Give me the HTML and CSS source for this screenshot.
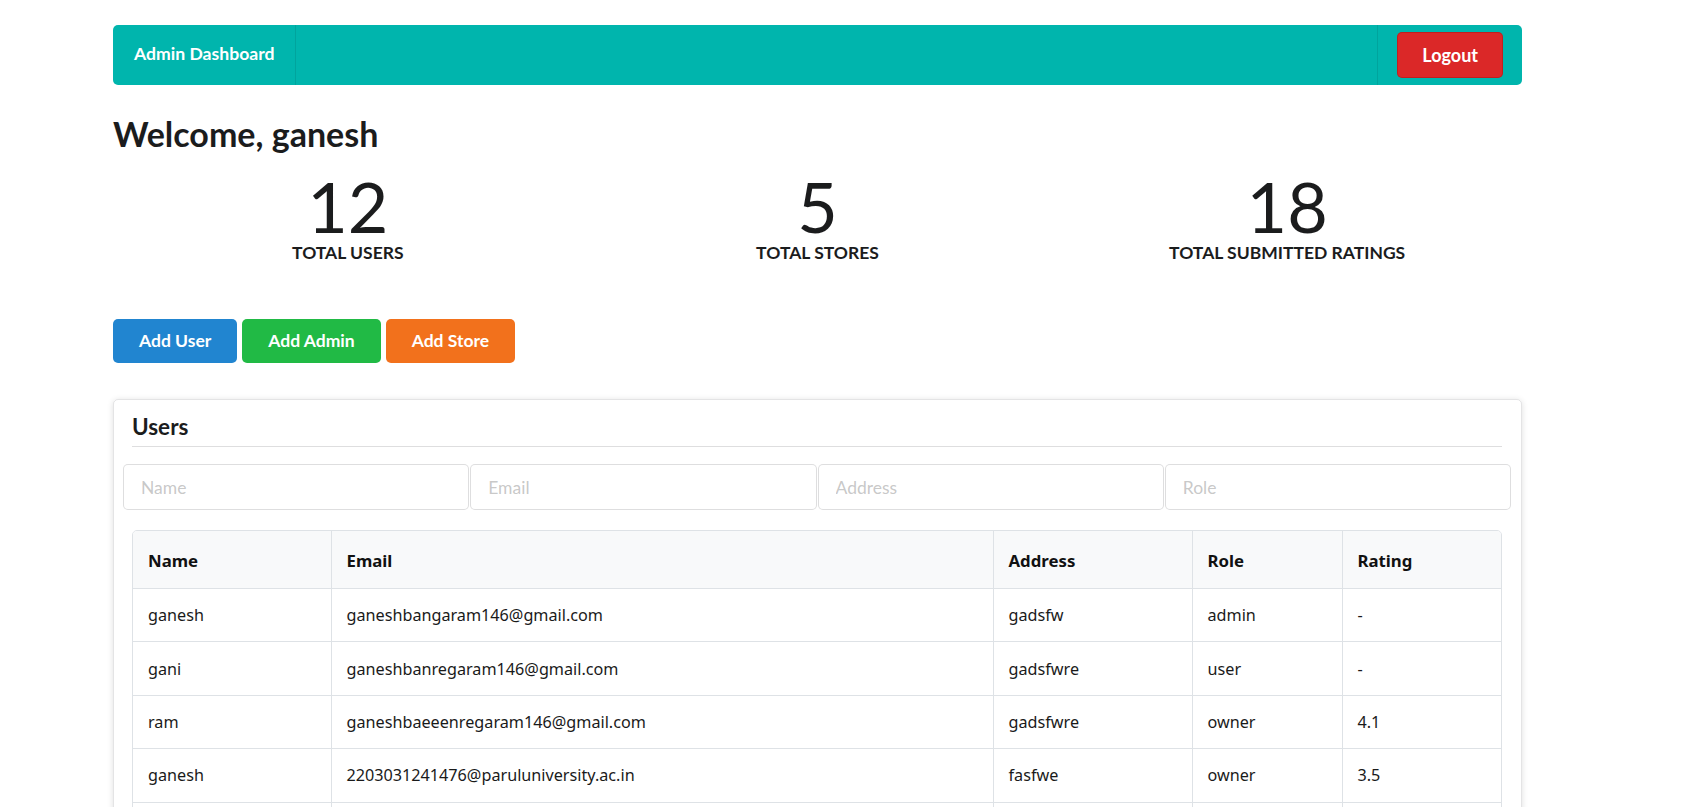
FILE: index.html
```html
<!DOCTYPE html>
<html lang="en">
<head>
<meta charset="utf-8">
<title>Admin Dashboard</title>
<link rel="stylesheet" href="styles.css">
</head>
<body>
<div class="page">
  <nav class="menu">
    <div class="menu-item menu-header">Admin Dashboard</div>
    <div class="menu-fill"></div>
    <div class="menu-item menu-right"><button class="btn btn-red btn-logout">Logout</button></div>
  </nav>

  <h2 class="welcome">Welcome, ganesh</h2>

  <div class="stats">
    <div class="stat">
      <div class="stat-value">12</div>
      <div class="stat-label">Total Users</div>
    </div>
    <div class="stat">
      <div class="stat-value">5</div>
      <div class="stat-label">Total Stores</div>
    </div>
    <div class="stat">
      <div class="stat-value">18</div>
      <div class="stat-label">Total Submitted Ratings</div>
    </div>
  </div>

  <div class="actions">
    <button class="btn btn-blue">Add User</button>
    <button class="btn btn-green">Add Admin</button>
    <button class="btn btn-orange">Add Store</button>
  </div>

  <section class="card">
    <h3 class="card-title">Users</h3>
    <div class="filters">
      <input class="filter" type="text" placeholder="Name">
      <input class="filter" type="text" placeholder="Email">
      <input class="filter" type="text" placeholder="Address">
      <input class="filter" type="text" placeholder="Role">
    </div>
    <div class="table-wrap">
      <table class="users">
        <colgroup>
          <col class="c-name"><col class="c-email"><col class="c-address"><col class="c-role"><col class="c-rating">
        </colgroup>
        <thead>
          <tr><th>Name</th><th>Email</th><th>Address</th><th>Role</th><th>Rating</th></tr>
        </thead>
        <tbody>
          <tr><td>ganesh</td><td>ganeshbangaram146@gmail.com</td><td>gadsfw</td><td>admin</td><td>-</td></tr>
          <tr><td>gani</td><td>ganeshbanregaram146@gmail.com</td><td>gadsfwre</td><td>user</td><td>-</td></tr>
          <tr><td>ram</td><td>ganeshbaeeenregaram146@gmail.com</td><td>gadsfwre</td><td>owner</td><td>4.1</td></tr>
          <tr><td>ganesh</td><td>2203031241476@paruluniversity.ac.in</td><td>fasfwe</td><td>owner</td><td>3.5</td></tr>
          <tr><td>ganesh</td><td>ganesh146@gmail.com</td><td>gadsfw</td><td>user</td><td>-</td></tr>
          <tr><td>gani</td><td>gani146@gmail.com</td><td>gadsfwre</td><td>owner</td><td>4.0</td></tr>
        </tbody>
      </table>
    </div>
  </section>
</div>
</body>
</html>
```

FILE: styles.css
```css
* { box-sizing: border-box; }

html, body {
  margin: 0;
  padding: 0;
  background: #ffffff;
}

body {
  font-family: Lato, "Helvetica Neue", Arial, sans-serif;
  font-size: 17.5px;
  color: rgba(0, 0, 0, 0.87);
}

.page {
  width: 1409px;
  margin-left: 113px;
  padding-top: 25px;
  padding-bottom: 40px;
}

/* navbar */
.menu {
  display: flex;
  align-items: stretch;
  height: 60px;
  background: #00b5ad;
  border-radius: 5px;
  color: #ffffff;
}

.menu-item {
  display: flex;
  align-items: center;
}

.menu-header {
  padding: 0 20px 4px 21px;
  font-weight: 700;
  font-size: 17.6px;
  border-right: 1px solid rgba(0, 0, 0, 0.09);
}

.menu-fill { flex: 1; }

.menu-right {
  padding: 0 19px;
  border-left: 1px solid rgba(0, 0, 0, 0.09);
}

/* buttons */
.btn {
  font-family: Lato, "Helvetica Neue", Arial, sans-serif;
  font-size: 17.5px;
  font-weight: 700;
  line-height: 1em;
  color: #ffffff;
  border: none;
  border-radius: 5px;
  padding: 0 26px;
  height: 44.5px;
  cursor: pointer;
}

.btn-red { background: #db2828; }
.btn-blue { background: #2185d0; }
.btn-green { background: #21ba45; }
.btn-orange { background: #f2711c; }

.btn-logout {
  font-size: 18px;
  height: 46px;
  padding: 0 25px;
  box-shadow: inset 0 0 0 1px rgba(120, 0, 0, 0.25);
}

/* welcome */
.welcome {
  margin: 26.5px 0 0;
  font-size: 34px;
  font-weight: 700;
  line-height: 1.2857;
  color: #1b1c1d;
}

/* stats */
.stats {
  display: grid;
  grid-template-columns: repeat(3, 1fr);
  margin-top: 16px;
}

.stat {
  display: flex;
  flex-direction: column;
  align-items: center;
  color: #1b1c1d;
}

.stat-value {
  font-size: 70px;
  font-weight: 400;
  line-height: 1;
}

.stat-label {
  font-size: 17.5px;
  font-weight: 700;
  text-transform: uppercase;
  line-height: 1.2857;
  margin-top: 1px;
}

/* actions */
.actions {
  display: flex;
  gap: 5px;
  margin-top: 54px;
}

/* card */
.card {
  margin-top: 36px;
  border: 1px solid rgba(34, 36, 38, 0.12);
  border-radius: 5px;
  box-shadow: 0 1px 6px rgba(0, 0, 0, 0.13);
  padding: 13px 19px 20px 18px;
}

.card-title {
  margin: 0;
  font-size: 22.5px;
  font-weight: 700;
  line-height: 1.2857;
  color: #1b1c1d;
  padding-bottom: 4px;
  border-bottom: 1px solid rgba(34, 36, 38, 0.15);
}

.filters {
  display: grid;
  grid-template-columns: repeat(4, 1fr);
  gap: 1px;
  margin: 17px -9px 0 -9px;
}

.filter {
  height: 46px;
  padding: 0 17px;
  font-family: Lato, "Helvetica Neue", Arial, sans-serif;
  font-size: 17.5px;
  color: rgba(0, 0, 0, 0.87);
  border: 1px solid rgba(34, 36, 38, 0.15);
  border-radius: 5px;
  outline: none;
  min-width: 0;
}

.filter::placeholder {
  color: rgba(191, 191, 191, 0.87);
}

/* table */
.table-wrap {
  margin-top: 20px;
  border: 1px solid #dee2e6;
  border-radius: 5px;
  overflow: hidden;
}

.users {
  width: 100%;
  border-collapse: collapse;
  table-layout: fixed;
  font-family: "Noto Sans", "Open Sans", sans-serif;
  font-size: 16.2px;
  color: #1a1a1a;
}

.c-name { width: 198px; }
.c-email { width: 662px; }
.c-address { width: 199px; }
.c-role { width: 150px; }
.c-rating { width: auto; }

.users th,
.users td {
  text-align: left;
  padding: 14.2px 15px;
  line-height: 24px;
  border-left: 1px solid #dee2e6;
  border-top: 1px solid #dee2e6;
}

.users th {
  background: #f8f9fa;
  font-weight: 700;
  font-size: 16.8px;
  padding: 17.5px 15px 15.5px;
  color: #111;
}

.users tr > :first-child { border-left: none; }
.users thead tr > * { border-top: none; }
```
